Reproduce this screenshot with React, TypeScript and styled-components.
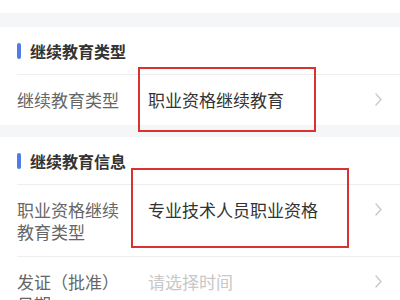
import React from "react";
import styled, { createGlobalStyle } from "styled-components";

const Global = createGlobalStyle`
  html, body { margin: 0; padding: 0; background: #f5f6f8; }
  body { font-family: "Noto Sans CJK SC", "Noto Sans", sans-serif; overflow: hidden; }
`;

const Page = styled.div`
  width: 400px;
  display: flex;
  flex-direction: column;
`;

const TopStub = styled.div`
  height: 13px;
  background: #ffffff;
`;

const Gap = styled.div<{ $h: number }>`
  height: ${(p) => p.$h}px;
  background: #f5f6f8;
`;

const Card = styled.section`
  background: #ffffff;
  display: flex;
  flex-direction: column;
`;

const Header = styled.div`
  height: 48px;
  display: flex;
  align-items: center;
  padding-left: 17px;
  gap: 9px;
  box-sizing: border-box;
  position: relative;
  &::after {
    content: "";
    position: absolute;
    left: 17px;
    right: 0;
    bottom: 0;
    height: 1px;
    background: #eeeeee;
  }
`;

const Bar = styled.span`
  width: 4px;
  height: 16px;
  border-radius: 2px;
  background: #4f7ce8;
`;

const Title = styled.h2`
  margin: 0;
  font-size: 16px;
  font-weight: 600;
  color: #333333;
  line-height: 22px;
`;

const Row = styled.div<{ $divider?: boolean }>`
  position: relative;
  display: flex;
  align-items: flex-start;
  padding: 14px 18px 14px 17px;
  &::after {
    content: "";
    display: ${(p) => (p.$divider ? "block" : "none")};
    position: absolute;
    left: 17px;
    right: 0;
    bottom: 0;
    height: 1px;
    background: #eeeeee;
  }
`;

const Label = styled.div`
  width: 110px;
  margin-right: 21px;
  font-size: 17px;
  line-height: 22px;
  color: #666666;
  flex-shrink: 0;
`;

const Value = styled.div<{ $placeholder?: boolean }>`
  flex: 1;
  font-size: 17px;
  line-height: 22px;
  color: ${(p) => (p.$placeholder ? "#c8c8c8" : "#333333")};
`;

const Chevron = styled.svg`
  width: 7px;
  height: 13px;
  margin-top: 4px;
  flex-shrink: 0;
`;

const Mark = styled.div<{ $l: number; $t: number; $w: number; $h: number }>`
  position: absolute;
  left: ${(p) => p.$l}px;
  top: ${(p) => p.$t}px;
  width: ${(p) => p.$w}px;
  height: ${(p) => p.$h}px;
  border: 2px solid #d8332f;
  box-sizing: border-box;
  pointer-events: none;
`;

const Arrow = () => (
  <Chevron viewBox="0 0 7 13">
    <path d="M1 1 L6 6.5 L1 12" fill="none" stroke="#c8c8c8" strokeWidth="1.3" strokeLinecap="round" strokeLinejoin="round" />
  </Chevron>
);

export default function App() {
  return (
    <Page>
      <Global />
      <TopStub />
      <Gap $h={14} />
      <Card>
        <Header>
          <Bar />
          <Title>继续教育类型</Title>
        </Header>
        <Row>
          <Label>继续教育类型</Label>
          <Value>职业资格继续教育</Value>
          <Arrow />
          <Mark $l={138} $t={-8} $w={178} $h={65} />
        </Row>
      </Card>
      <Gap $h={12} />
      <Card>
        <Header>
          <Bar />
          <Title>继续教育信息</Title>
        </Header>
        <Row $divider>
          <Label>职业资格继续教育类型</Label>
          <Value>专业技术人员职业资格</Value>
          <Arrow />
          <Mark $l={131} $t={-17} $w={218} $h={80} />
        </Row>
        <Row $divider>
          <Label>发证（批准）日期</Label>
          <Value $placeholder>请选择时间</Value>
          <Arrow />
        </Row>
      </Card>
    </Page>
  );
}
